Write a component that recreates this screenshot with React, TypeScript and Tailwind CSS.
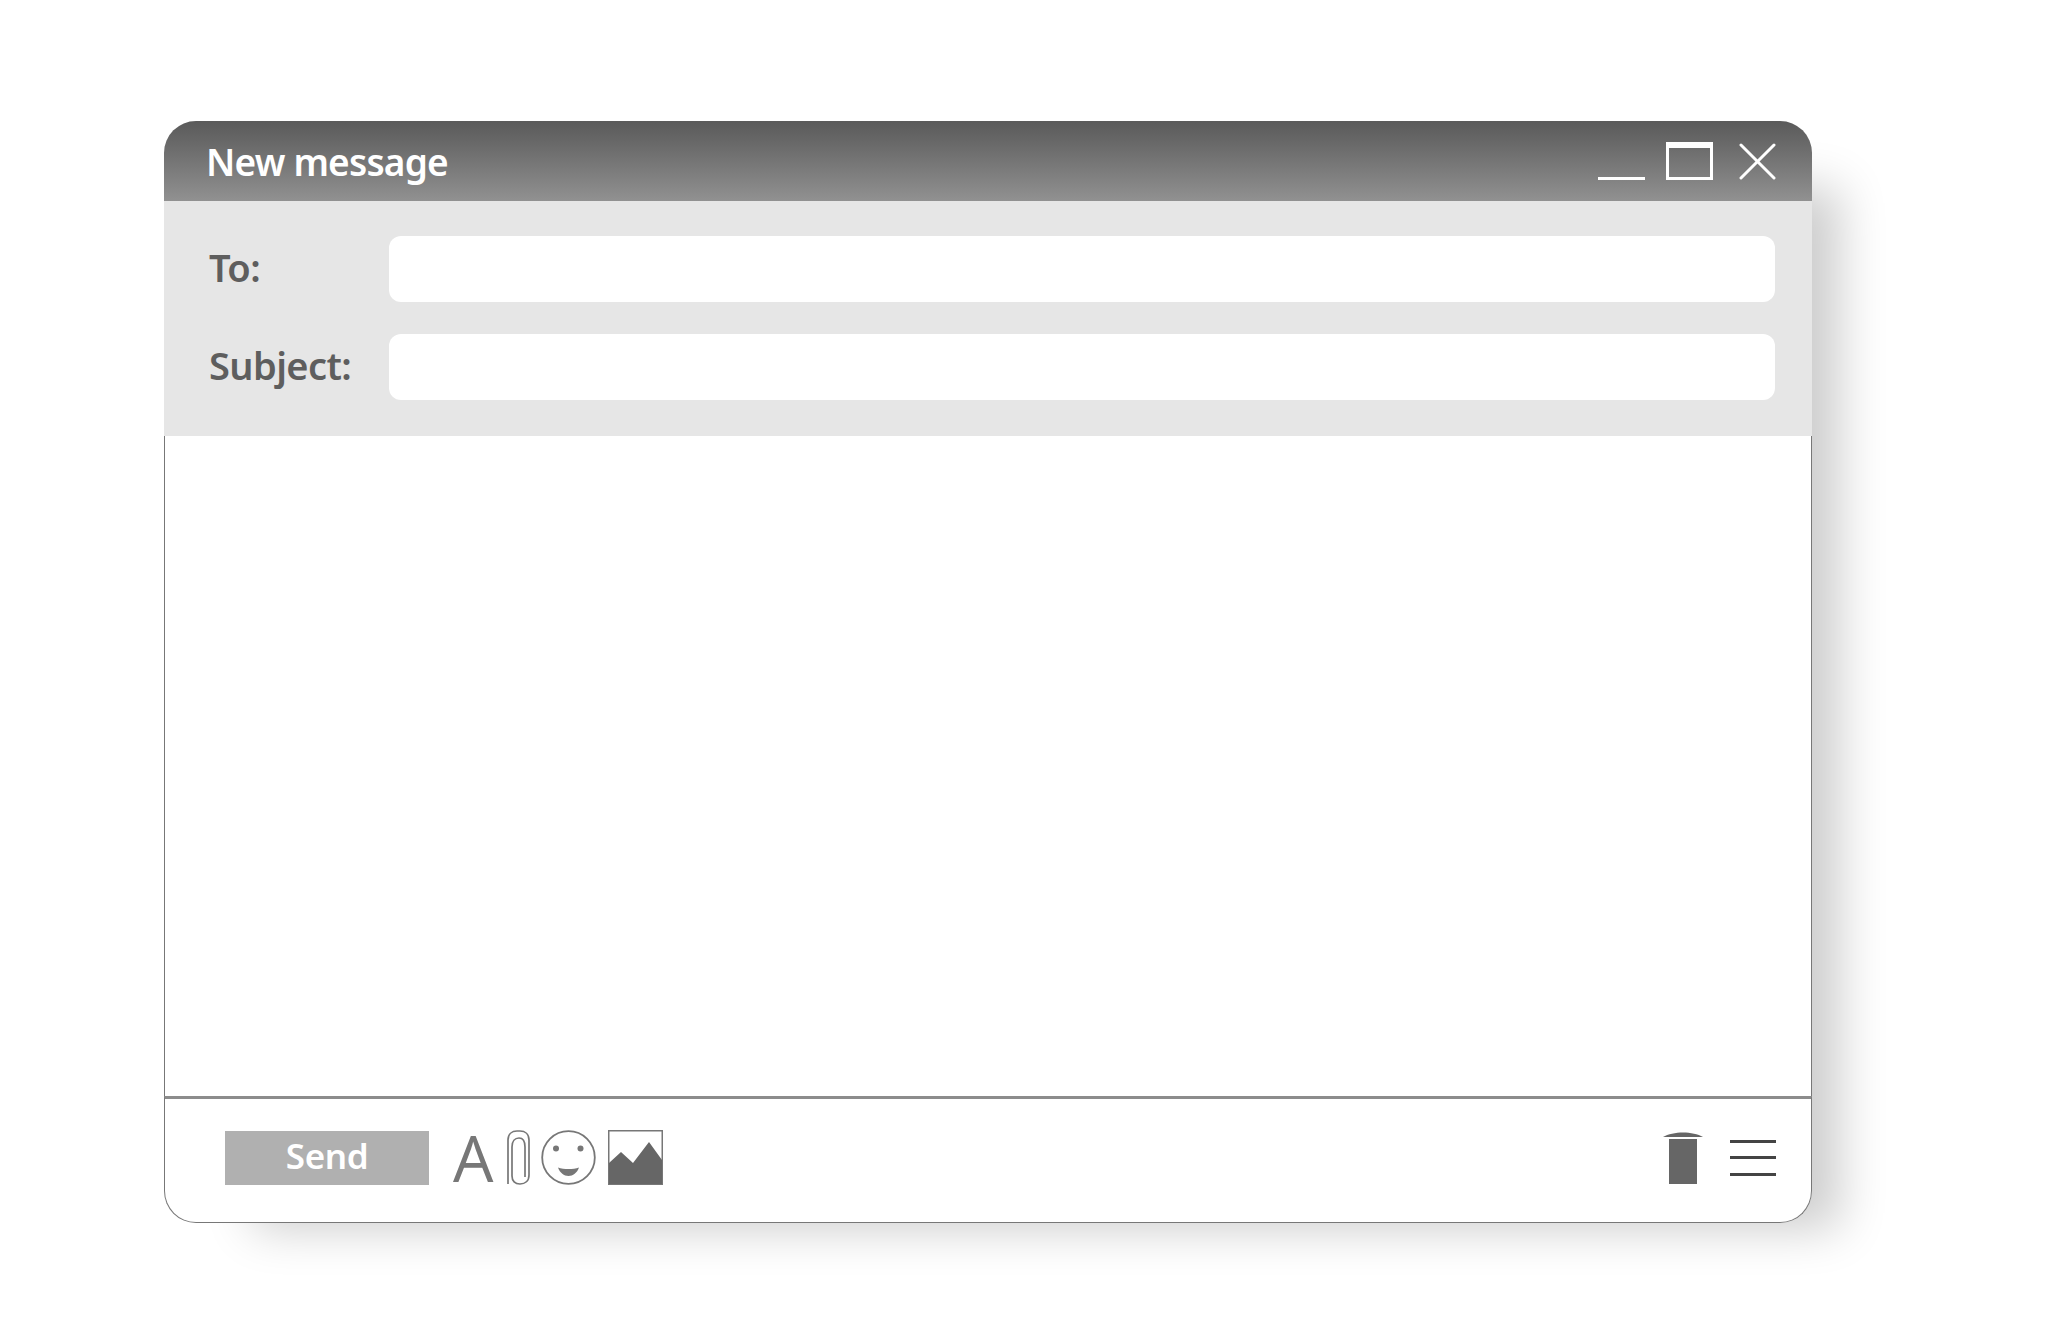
import React from 'react';

function WindowControls() {
  return (
    <div className="flex items-end gap-[21px]">
      <div className="w-[47px] h-[3px] bg-white mb-[1px]" />
      <div className="w-[47px] h-[38px] border-[3px] border-t-[6px] border-white mb-[1px]" />
      <svg width="37" height="37" viewBox="0 0 37 37" className="ml-[5px] mb-[1px]" fill="none" stroke="white" strokeWidth="3" strokeLinecap="round">
        <path d="M2 2 L35 35" />
        <path d="M35 2 L2 35" />
      </svg>
    </div>
  );
}

function FieldRow({ label }: { label: string }) {
  return (
    <div className="flex items-center">
      <label className="w-[180px] pb-[5px] text-[38px] leading-none font-semibold tracking-[-0.6px] text-[#5e5e5e]">{label}</label>
      <div className="flex-1 h-[66px] rounded-[12px] bg-white" />
    </div>
  );
}

function PaperclipIcon() {
  return (
    <svg width="23" height="55" viewBox="0 0 23 55" fill="none" stroke="#777" strokeWidth="1.7" className="block">
      <path d="M1 54 V10 C1 4 5 1 10 1 H13 C18 1 22 4 22 10 V45 C22 51 18 54 13 54 C8 54 5 51 5 46 V17 C5 11 8 8 12 8 C16 8 18 11 18 17 V47" />
    </svg>
  );
}

function SmileIcon() {
  return (
    <svg width="55" height="55" viewBox="0 0 55 55" fill="none" className="block">
      <circle cx="27.5" cy="27.5" r="26.3" stroke="#777" strokeWidth="1.8" />
      <circle cx="15" cy="18.5" r="3" fill="#777" />
      <circle cx="39.5" cy="18.5" r="3" fill="#777" />
      <path d="M17 37.5 C23 39.5 32 39.5 38 37.5 C36 43 32 46 27.5 46 C23 46 19 43 17 37.5 Z" fill="#777" />
    </svg>
  );
}

function PictureIcon() {
  return (
    <svg width="55" height="55" viewBox="0 0 55 55" fill="none" className="block">
      <rect x="0.75" y="0.75" width="53.5" height="53.5" fill="white" stroke="#777" strokeWidth="1.5" />
      <path d="M1 33 L13 22 L25 33 L41 12 L54 30 V54 H1 Z" fill="#666" />
    </svg>
  );
}

function TrashIcon() {
  return (
    <div className="flex flex-col items-center">
      <svg width="40" height="6" viewBox="0 0 40 6" className="block">
        <path d="M0 6 C10 0 30 0 40 6 Z" fill="#666" />
      </svg>
      <div className="w-[28px] h-[45px] mt-[2px] bg-[#666]" />
    </div>
  );
}

export default function App() {
  return (
    <div className="min-h-[1339px] bg-white pt-[121px] pl-[164px] font-['Noto_Sans',sans-serif]">
      <div className="w-[1648px] rounded-[32px] shadow-[58px_36px_48px_-30px_rgba(0,0,0,0.2)]">
        <div className="h-[80px] flex items-center justify-between pl-[42px] pr-[36px] rounded-t-[32px] bg-gradient-to-b from-[#5a5a5a] to-[#919191]">
          <span className="text-[37px] leading-none font-semibold tracking-[-0.8px] text-white">New message</span>
          <WindowControls />
        </div>

        <div className="bg-[#e6e6e6] pt-[35px] pb-[36px] pl-[45px] pr-[37px] flex flex-col gap-[32px]">
          <FieldRow label="To:" />
          <FieldRow label="Subject:" />
        </div>

        <div className="h-[660px] bg-white border-x border-[#777]" />

        <div className="h-[127px] pb-[6px] flex items-center justify-between pl-[60px] pr-[35px] bg-white rounded-b-[32px] border border-[#777] border-t-[3px] border-t-[#8c8c8c]">
          <div className="flex items-center">
            <button className="w-[204px] h-[54px] pb-[4px] bg-[#b0b0b0] text-[35px] leading-none font-semibold tracking-[-0.4px] text-white">Send</button>
            <span className="ml-[24px] w-[44px] text-[64px] leading-none font-['Open_Sans',sans-serif] text-[#777]">A</span>
            <div className="ml-[10px]"><PaperclipIcon /></div>
            <div className="ml-[11px]"><SmileIcon /></div>
            <div className="ml-[12px]"><PictureIcon /></div>
          </div>
          <div className="flex items-center gap-[27px]">
            <TrashIcon />
            <div className="w-[46px] flex flex-col gap-[13.5px]">
              <div className="h-[3px] bg-[#444]" />
              <div className="h-[3px] bg-[#444]" />
              <div className="h-[3px] bg-[#444]" />
            </div>
          </div>
        </div>
      </div>
    </div>
  );
}
